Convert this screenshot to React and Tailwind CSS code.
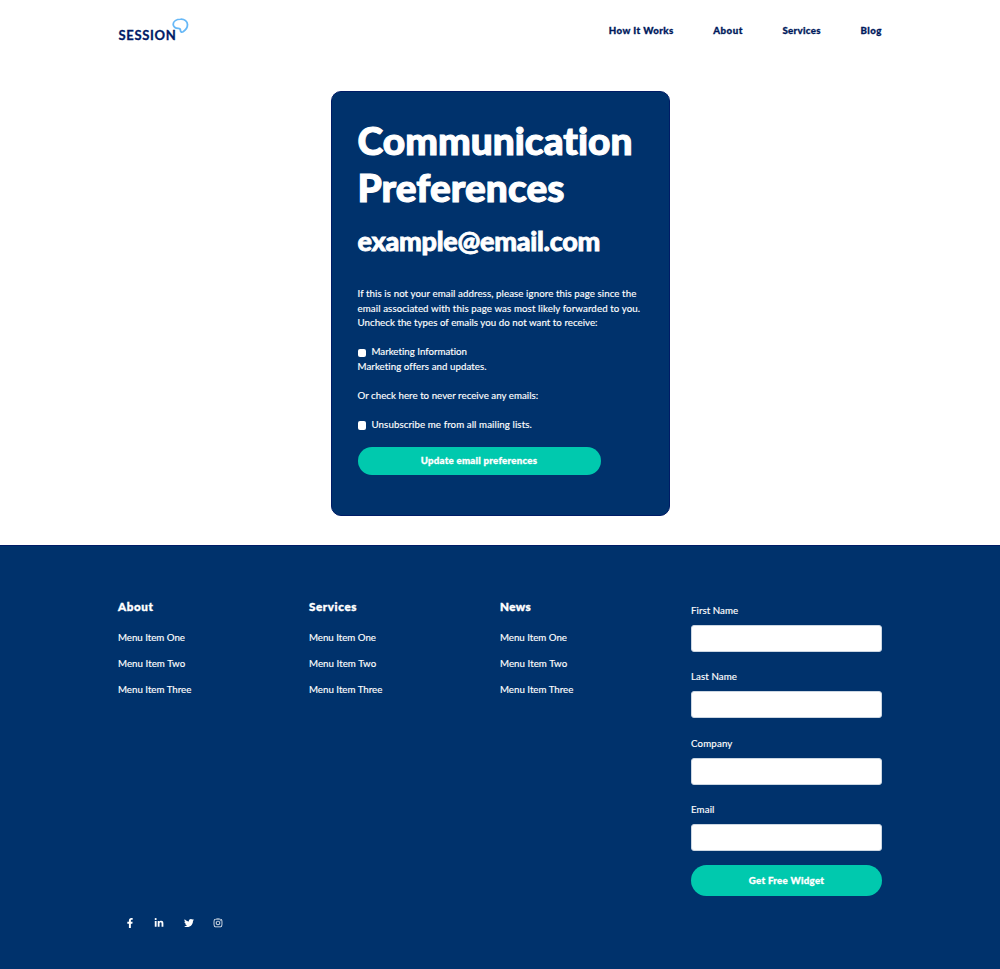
import { FaFacebookF, FaLinkedinIn, FaTwitter, FaInstagram } from "react-icons/fa";

const nav = [
  { label: "How It Works", cls: "w-[65px] tracking-[0.42px]" },
  { label: "About", cls: "w-[29.5px] tracking-[0.48px]" },
  { label: "Services", cls: "w-[38.5px] tracking-[0.32px]" },
  { label: "Blog", cls: "w-[22px] tracking-[0.5px]" },
];

const columns = [
  { title: "About", cls: "tracking-[0.62px]" },
  { title: "Services", cls: "tracking-[0.62px]" },
  { title: "News", cls: "tracking-[0.45px]" },
];

const menuItems = [
  { label: "Menu Item One", cls: "tracking-[-0.01px]" },
  { label: "Menu Item Two", cls: "tracking-[0.06px]" },
  { label: "Menu Item Three", cls: "tracking-[0.01px]" },
];

const fields = [
  { label: "First Name", cls: "tracking-[0.05px]" },
  { label: "Last Name", cls: "tracking-[0.1px]" },
  { label: "Company", cls: "tracking-[0.16px]" },
  { label: "Email", cls: "tracking-[0.13px]" },
];

const socials = [
  { name: "Facebook", Icon: FaFacebookF },
  { name: "LinkedIn", Icon: FaLinkedinIn },
  { name: "Twitter", Icon: FaTwitter },
  { name: "Instagram", Icon: FaInstagram },
];

function Logo() {
  return (
    <a href="#" className="flex items-start pt-[18px] text-[#001a66]">
      <span className="mt-[9px] ml-[0.5px] w-[53px] text-[13px] leading-4 font-bold tracking-[0.66px] [-webkit-text-stroke:0.3px]">SESSION</span>
      <svg className="h-[16px] w-[17px]" viewBox="0 0 17 16" fill="none" stroke="#66b8f7" strokeWidth="1.8" strokeLinejoin="round">
        <path d="M8.6 1.2C12.6 1 15.500 3.300 15.500 6.600c0 3.300-2 5.700-4.400 7.100-1.500.8-2.700.1-2.700-1.500 0-1.300-.6-1.900-2.100-1.900C3.200 10.300 1.200 8.700 1.200 6.300 1.200 3.300 4.500 1.300 8.600 1.200Z" />
      </svg>
    </a>
  );
}

function Checkbox({ label, cls }) {
  return (
    <label className="flex h-[14.55px] items-center">
      <input type="checkbox" className="mt-[2px] mr-[5.5px] size-[8.5px] appearance-none rounded-[2px] bg-white" />
      <span className={cls}>{label}</span>
    </label>
  );
}

export default function App() {
  return (
    <div className="flex min-h-[969px] flex-col overflow-hidden bg-white font-['Lato',sans-serif] text-[9.7px] leading-[14.55px] whitespace-nowrap [font-variant-ligatures:none] [-webkit-text-stroke:0.15px]">
      <header className="flex h-[91px] justify-between px-[118px]">
        <Logo />
        <nav className="-mr-[0.5px] flex gap-[39.6px] pt-[23px] font-black text-[#001a5c] [-webkit-text-stroke:0.3px]">
          {nav.map((n) => (
            <a key={n.label} href="#" className={n.cls}>{n.label}</a>
          ))}
        </nav>
      </header>

      <main className="flex h-[454px] justify-center">
        <section className="h-[425px] w-[339px] rounded-[10px] border border-[#001c66] bg-[#00326c] px-[26px] pt-[24.5px] text-white">
          <h1 className="text-[38.8px] leading-[47px] font-black [-webkit-text-stroke:1.1px]">
            <span className="block tracking-[0.04px]">Communication</span>
            <span className="block tracking-[0.05px]">Preferences</span>
          </h1>
          <h2 className="mt-[14px] text-[27px] leading-8 font-black tracking-[-0.28px] [-webkit-text-stroke:0.8px]">example@email.com</h2>
          <p className="mt-[29.8px]">
            <span className="block tracking-[0.09px]">If this is not your email address, please ignore this page since the</span>
            <span className="block tracking-[0.11px]">email associated with this page was most likely forwarded to you.</span>
            <span className="block tracking-[0.04px]">Uncheck the types of emails you do not want to receive:</span>
          </p>
          <div className="mt-[14.55px]">
            <Checkbox label="Marketing Information" cls="tracking-[0.01px]" />
            <p className="tracking-[0.07px]">Marketing offers and updates.</p>
          </div>
          <p className="my-[14.55px] tracking-[0.04px]">Or check here to never receive any emails:</p>
          <Checkbox label="Unsubscribe me from all mailing lists." cls="tracking-[0.1px]" />
          <button className="mt-[14.9px] h-[28px] w-[243px] rounded-full bg-[#00c9ae] font-black tracking-[0.24px] [-webkit-text-stroke:0.3px]">Update email preferences</button>
        </section>
      </main>

      <footer className="flex grow flex-col border-t border-[#001c66] bg-[#00326c] px-[118px] text-white">
        <div className="grid h-[359px] grid-cols-[191px_191px_191px_191px]">
          {columns.map((c) => (
            <div key={c.title} className="pt-[52.5px]">
              <h3 className={`text-[11.6px] leading-4 font-black [-webkit-text-stroke:0.4px] ${c.cls}`}>{c.title}</h3>
              <ul className="mt-[15.5px] flex flex-col gap-[11.5px]">
                {menuItems.map((m) => (
                  <li key={m.label} className={m.cls}>{m.label}</li>
                ))}
              </ul>
            </div>
          ))}
          <form className="pt-[56.8px]">
            {fields.map((f) => (
              <label key={f.label} className="block h-[66.4px]">
                <span className={`block ${f.cls}`}>{f.label}</span>
                <input className="mt-[7.5px] block h-[27px] w-full rounded-[3px] border border-[#cbd6e2] bg-white" />
              </label>
            ))}
            <button type="button" className="-mt-[3px] h-[30.5px] w-full rounded-full bg-[#00c9ae] font-black tracking-[0.27px] [-webkit-text-stroke:0.3px]">Get Free Widget</button>
          </form>
        </div>
        <div className="mt-[13px] ml-[7px] flex gap-[19.3px]">
          {socials.map(({ name, Icon }) => (
            <a key={name} href="#" aria-label={name}>
              <Icon className="size-[10px]" />
            </a>
          ))}
        </div>
      </footer>
    </div>
  );
}
